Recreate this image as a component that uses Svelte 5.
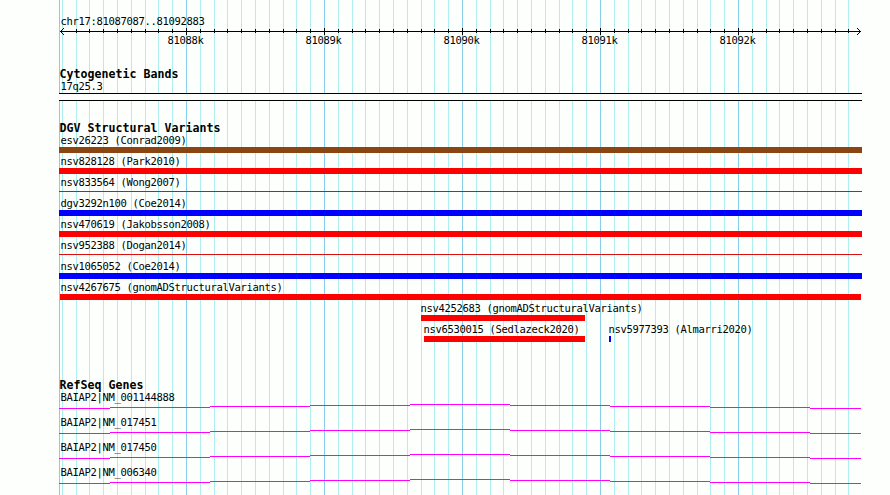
<script>
  const majors = [186, 324, 462, 600, 738];
  const offsets = [14, 28, 41, 55, 69, 83, 97, 110, 124];

  let minors = [];
  for (const start of [48, ...majors]) {
    for (const offset of offsets) {
      if (start + offset < 860) minors.push(start + offset);
    }
  }

  // left and width are measured from the left edge of the panel
  const variants = [
    [{ name: 'esv26223 (Conrad2009)', left: 0, width: 803, kind: 'brown' }],
    [{ name: 'nsv828128 (Park2010)', left: 0, width: 803, kind: 'red' }],
    [{ name: 'nsv833564 (Wong2007)', left: 0, width: 803, kind: 'thin' }],
    [{ name: 'dgv3292n100 (Coe2014)', left: 0, width: 803, kind: 'blue' }],
    [{ name: 'nsv470619 (Jakobsson2008)', left: 0, width: 803, kind: 'red' }],
    [{ name: 'nsv952388 (Dogan2014)', left: 0, width: 803, kind: 'thin' }],
    [{ name: 'nsv1065052 (Coe2014)', left: 0, width: 803, kind: 'blue' }],
    [{ name: 'nsv4267675 (gnomADStructuralVariants)', left: 1, width: 801, kind: 'red' }],
    [{ name: 'nsv4252683 (gnomADStructuralVariants)', left: 362, width: 164, kind: 'red' }],
    [
      { name: 'nsv6530015 (Sedlazeck2020)', left: 365, width: 161, kind: 'red' },
      { name: 'nsv5977393 (Almarri2020)', left: 550, width: 2, kind: 'blue' }
    ]
  ];

  const genes = ['NM_001144888', 'NM_017451', 'NM_017450', 'NM_006340'];

  // intron line, raised by one pixel per step towards the middle
  const steps = [
    [0, 51, 4], [51, 100, 3], [151, 100, 2], [251, 100, 1], [351, 100, 0],
    [451, 100, 1], [551, 100, 2], [651, 100, 3], [751, 51, 4]
  ];
</script>

<div class="browser">
  <svg class="grid" width="890" height="495" shape-rendering="crispEdges">
    {#each minors as x}
      <rect class="minor" {x} y="0" width="1" height="495" />
    {/each}
    {#each [59, ...majors] as x}
      <rect class="major" {x} y="0" width="1" height="495" />
    {/each}
  </svg>

  <div class="panel">
    <div class="region">chr17:81087087..81092883</div>
    <svg class="scale" width="803" height="22" viewBox="59 26 803 22">
      <g shape-rendering="crispEdges">
        <rect x="60" y="31" width="801" height="1" />
        {#each minors as x}
          {#if x > 62}
            <rect {x} y="29" width="1" height="4" />
          {/if}
        {/each}
        {#each majors as x}
          <rect {x} y="28" width="1" height="7" />
        {/each}
        <path d="M60 31h1v1h-1zM61 30h1v1h-1zM62 29h1v1h-1zM63 28h1v1h-1zM61 32h1v1h-1zM62 33h1v1h-1zM63 34h1v1h-1z" />
        <path d="M860 31h1v1h-1zM859 30h1v1h-1zM858 29h1v1h-1zM857 28h1v1h-1zM859 32h1v1h-1zM858 33h1v1h-1zM857 34h1v1h-1z" />
      </g>
      {#each majors as x, i}
        <text x={x - 18.5} y="44">{81088 + i}k</text>
      {/each}
    </svg>

    <section class="bands">
      <h2>Cytogenetic Bands</h2>
      <div class="label inset">17q25.3</div>
      <div class="band"></div>
    </section>

    <section class="variants">
      <h2>DGV Structural Variants</h2>
      {#each variants as row}
        <div class="row">
          {#each row as item}
            <div class="variant" style="margin-left: {item.left}px">
              <div class="label" class:inset={item.left === 0} class:edge={item.left === 1}>{item.name}</div>
              <div class="bar {item.kind}" style="width: {item.width}px"></div>
            </div>
          {/each}
        </div>
      {/each}
    </section>

    <section class="genes">
      <h2>RefSeq Genes</h2>
      {#each genes as gene}
        <div class="gene">
          <div class="label inset">BAIAP2|{gene}</div>
          <svg width="803" height="5" shape-rendering="crispEdges">
            {#each steps as [x, width, y]}
              <rect class="intron" {x} {y} {width} height="1" />
            {/each}
          </svg>
        </div>
      {/each}
    </section>
  </div>
</div>

<style>
  :global(body) {
    margin: 0;
    background: #fdfffc;
  }

  .browser {
    position: relative;
    width: 890px;
    height: 495px;
    overflow: hidden;
    background: #fdfffc;
    color: #000;
    font-family: 'DejaVu Sans Mono', monospace;
    font-size: 10.5px;
    letter-spacing: -0.32px;
  }

  .grid {
    position: absolute;
    top: 0;
    left: 0;
  }

  .minor {
    fill: #afeeee;
  }

  .major {
    fill: #87ceeb;
  }

  .panel {
    position: relative;
    box-sizing: border-box;
    width: 803px;
    margin-left: 59px;
    padding-top: 15px;
  }

  svg {
    display: block;
  }

  .region {
    height: 11px;
    padding-left: 1.5px;
    line-height: 13px;
    white-space: nowrap;
  }

  h2 {
    margin: 0;
    height: 12px;
    padding-left: 0.5px;
    font-size: 11.6px;
    font-weight: bold;
    letter-spacing: 0.016px;
    line-height: 12px;
    white-space: nowrap;
  }

  .label {
    height: 13px;
    margin-left: -0.5px;
    line-height: 13px;
    white-space: nowrap;
  }

  .bands {
    padding-top: 20px;
  }

  .band {
    box-sizing: border-box;
    height: 8px;
    border-top: 1px solid #000;
    border-bottom: 1px solid #000;
    background: #fdfffc;
  }

  .variants {
    padding-top: 21px;
  }

  .row {
    display: grid;
    height: 21px;
  }

  .variant {
    grid-area: 1 / 1;
  }

  .inset {
    padding-left: 2px;
  }

  .edge {
    padding-left: 1px;
  }

  .bar {
    height: 6px;
  }

  .brown {
    background: #8b4513;
  }

  .red {
    background: #f00;
  }

  .blue {
    background: #00f;
  }

  .thin {
    height: 1px;
    margin-top: 2px;
    background: #dc0f0f;
  }

  .genes {
    padding-top: 35px;
  }

  .gene {
    height: 25px;
  }

  .intron {
    fill: #f0f;
  }
</style>
